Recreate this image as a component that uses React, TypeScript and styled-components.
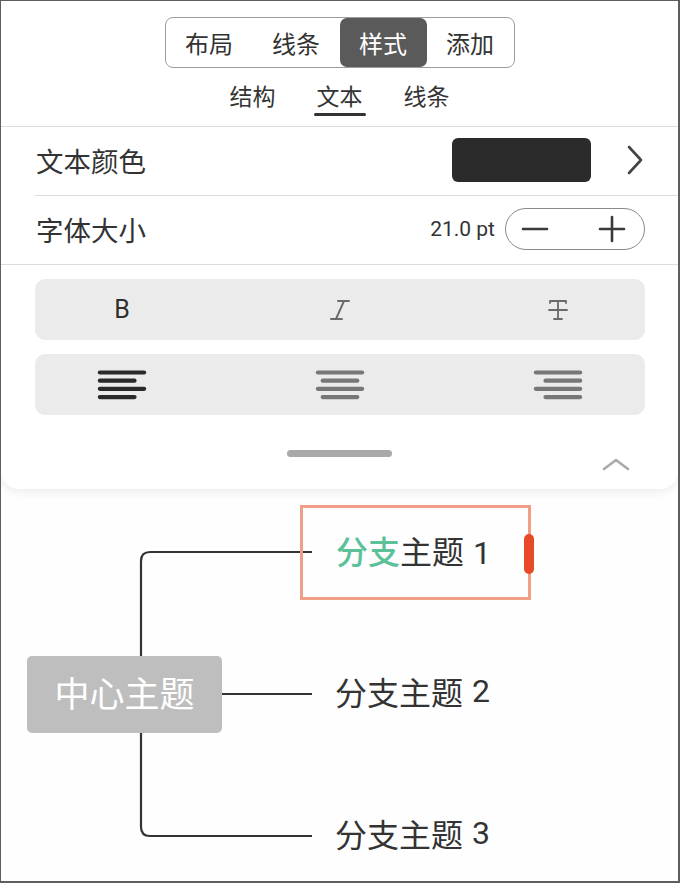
import React from "react";
import styled, { createGlobalStyle } from "styled-components";

const Global = createGlobalStyle`
  html, body { margin: 0; padding: 0; background: #fff; }
  * { box-sizing: border-box; }
  body { font-family: "Noto Sans", "Noto Sans CJK SC", sans-serif; color: #333; }
`;

const CJK = `"Noto Sans CJK SC", "Noto Sans", sans-serif`;
const LATIN = `Roboto, "Noto Sans", "Noto Sans CJK SC", sans-serif`;

const Frame = styled.div`
  width: 680px;
  height: 883px;
  border-style: solid;
  border-color: #5e5e5e;
  border-width: 1px 2px 2px 1px;
  background: #fefefe;
  display: flex;
  flex-direction: column;
  overflow: hidden;
`;

const Panel = styled.div`
  background: #fff;
  border-radius: 0 0 18px 18px;
  box-shadow: 0 3px 10px rgba(0, 0, 0, 0.07);
  display: flex;
  flex-direction: column;
  padding-top: 16px;
  position: relative;
  z-index: 1;
`;

const Segmented = styled.div`
  align-self: center;
  display: grid;
  grid-template-columns: repeat(4, 87px);
  height: 51px;
  border: 1px solid #9c9c9c;
  border-radius: 8px;
  background: #fff;
  overflow: hidden;
`;

const Segment = styled.div<{ $active?: boolean }>`
  display: flex;
  align-items: center;
  justify-content: center;
  font-family: ${CJK};
  font-size: 24px;
  color: ${(p) => (p.$active ? "#fff" : "#333")};
  background: ${(p) => (p.$active ? "#5a5a5a" : "transparent")};
  border-radius: ${(p) => (p.$active ? "7px" : "0")};
`;

const SubTabs = styled.div`
  align-self: center;
  margin-top: 9px;
  display: grid;
  grid-template-columns: repeat(3, 87px);
`;

const SubTab = styled.div<{ $active?: boolean }>`
  height: 49px;
  display: flex;
  flex-direction: column;
  align-items: center;
  padding-top: 4px;
  font-family: ${CJK};
  font-size: 23px;
  line-height: 28px;
  color: #333;
  &::after {
    content: "";
    margin-top: 4px;
    width: 52px;
    height: 3px;
    border-radius: 2px;
    background: ${(p) => (p.$active ? "#333" : "transparent")};
  }
`;

const Divider = styled.div<{ $inset?: boolean }>`
  height: 1px;
  background: #dcdcdc;
  margin-left: ${(p) => (p.$inset ? "34px" : "0")};
`;

const Row = styled.div`
  height: 68px;
  display: flex;
  align-items: center;
  padding: 0 33px 2px 35px;
`;

const Label = styled.div`
  flex: 1;
  font-family: ${CJK};
  font-size: 27.5px;
  color: #333;
`;

const Swatch = styled.div`
  width: 139px;
  height: 44px;
  border-radius: 6px;
  background: #2b2b2b;
  margin-right: 34px;
`;

const Value = styled.div`
  font-family: ${LATIN};
  font-size: 21px;
  color: #333;
  margin-right: 10px;
`;

const Stepper = styled.div`
  width: 140px;
  height: 42px;
  border: 1px solid #8a8a8a;
  border-radius: 21px;
  display: flex;
  align-items: center;
  justify-content: space-between;
  padding: 0 18px 0 15px;
`;

const Groups = styled.div`
  display: flex;
  flex-direction: column;
  gap: 14px;
  padding: 14px 33px 0 34px;
`;

const ButtonGroup = styled.div`
  height: 61px;
  border-radius: 10px;
  background: #ebebeb;
  display: flex;
  align-items: center;
  justify-content: space-between;
  padding: 0 62px;
`;

const ToolButton = styled.div`
  width: 50px;
  height: 40px;
  display: flex;
  align-items: center;
  justify-content: center;
`;

const BoldGlyph = styled.span`
  font-family: ${LATIN};
  font-size: 25px;
  font-weight: 400;
  color: #2e2e2e;
`;

const Footer = styled.div`
  height: 74px;
  position: relative;
  display: flex;
  align-items: center;
  justify-content: center;
  padding-top: 3px;
`;

const Handle = styled.div`
  width: 105px;
  height: 7px;
  border-radius: 4px;
  background: #a9a9a9;
`;

const CollapseIcon = styled.div`
  position: absolute;
  right: 48px;
  top: 42px;
  display: flex;
`;

const Canvas = styled.div`
  position: relative;
  flex: 1;
`;

const Lines = styled.svg`
  position: absolute;
  left: 0;
  top: 0;
`;

const Central = styled.div`
  position: absolute;
  left: 26px;
  top: 167px;
  width: 195px;
  height: 77px;
  border-radius: 5px;
  background: #bebebe;
  color: #fff;
  display: flex;
  align-items: center;
  justify-content: center;
  padding-bottom: 6px;
  font-family: ${CJK};
  font-size: 35px;
`;

const SelectedBox = styled.div`
  position: absolute;
  left: 299px;
  top: 16px;
  width: 231px;
  height: 95px;
  border: 3px solid #ef9f86;
  display: flex;
  align-items: center;
  padding-left: 33px;
  padding-bottom: 6px;
`;

const ResizeHandle = styled.div`
  position: absolute;
  right: -6px;
  top: 26px;
  width: 10px;
  height: 40px;
  border-radius: 5px;
  background: #e64a28;
`;

const Branch = styled.div<{ $top: number }>`
  position: absolute;
  left: 334px;
  top: ${(p) => p.$top}px;
  height: 44px;
  display: flex;
  align-items: center;
  font-family: ${CJK};
  font-size: 32px;
  color: #333;
`;

const BranchText = styled.span`
  font-family: ${CJK};
  font-size: 32px;
  color: #333;
`;

const Accent = styled.span`
  color: #5cc199;
  font-weight: 500;
`;

const Num = styled.span`
  font-family: ${LATIN};
  margin-left: 9px;
`;

const Chevron = () => (
  <svg width="20" height="32" viewBox="0 0 20 32">
    <path d="M4 3 L16 16 L4 29" fill="none" stroke="#444" strokeWidth="2.6" strokeLinecap="round" strokeLinejoin="round" />
  </svg>
);

const Minus = () => (
  <svg width="28" height="28" viewBox="0 0 28 28">
    <path d="M2 14 H26" stroke="#3a3a3a" strokeWidth="2.6" strokeLinecap="round" />
  </svg>
);

const Plus = () => (
  <svg width="28" height="28" viewBox="0 0 28 28">
    <path d="M2 14 H26 M14 2 V26" stroke="#3a3a3a" strokeWidth="2.6" strokeLinecap="round" />
  </svg>
);

const ItalicIcon = () => (
  <svg width="22" height="26" viewBox="0 0 22 26">
    <path d="M9 4 H20 M2 22 H13 M15 4 L7 22" stroke="#6a6a6a" strokeWidth="1.9" fill="none" strokeLinecap="round" />
  </svg>
);

const StrikeIcon = () => (
  <svg width="22" height="26" viewBox="0 0 22 26">
    <path d="M3 4 H19 M3 4 V6 M19 4 V6 M11 4 V22 M7 22 H15 M2 13 H20" stroke="#6a6a6a" strokeWidth="1.8" fill="none" strokeLinecap="round" />
  </svg>
);

const AlignIcon = ({ kind, color }: { kind: "left" | "center" | "right"; color: string }) => {
  const rows = [50, 40, 50, 40];
  return (
    <svg width="52" height="34" viewBox="0 0 52 34">
      {rows.map((w, i) => {
        const x = kind === "left" ? 1 : kind === "center" ? 1 + (50 - w) / 2 : 51 - w;
        const y = 4 + i * 8.5;
        return <line key={i} x1={x + 2} x2={x + w - 2} y1={y} y2={y} stroke={color} strokeWidth="4.4" strokeLinecap="round" />;
      })}
    </svg>
  );
};

const ChevronUp = () => (
  <svg width="28" height="16" viewBox="0 0 28 16">
    <path d="M2 12 L14 3 L26 12" fill="none" stroke="#a9a9a9" strokeWidth="2.6" strokeLinecap="round" strokeLinejoin="round" />
  </svg>
);

export default function App() {
  return (
    <>
      <Global />
      <Frame>
        <Panel>
          <Segmented>
            <Segment>布局</Segment>
            <Segment>线条</Segment>
            <Segment $active>样式</Segment>
            <Segment>添加</Segment>
          </Segmented>
          <SubTabs>
            <SubTab>结构</SubTab>
            <SubTab $active>文本</SubTab>
            <SubTab>线条</SubTab>
          </SubTabs>
          <Divider />
          <Row>
            <Label>文本颜色</Label>
            <Swatch />
            <Chevron />
          </Row>
          <Divider $inset />
          <Row>
            <Label>字体大小</Label>
            <Value>21.0 pt</Value>
            <Stepper>
              <Minus />
              <Plus />
            </Stepper>
          </Row>
          <Divider />
          <Groups>
            <ButtonGroup>
              <ToolButton>
                <BoldGlyph>B</BoldGlyph>
              </ToolButton>
              <ToolButton>
                <ItalicIcon />
              </ToolButton>
              <ToolButton>
                <StrikeIcon />
              </ToolButton>
            </ButtonGroup>
            <ButtonGroup>
              <ToolButton>
                <AlignIcon kind="left" color="#2a2a2a" />
              </ToolButton>
              <ToolButton>
                <AlignIcon kind="center" color="#777" />
              </ToolButton>
              <ToolButton>
                <AlignIcon kind="right" color="#777" />
              </ToolButton>
            </ButtonGroup>
          </Groups>
          <Footer>
            <Handle />
            <CollapseIcon>
              <ChevronUp />
            </CollapseIcon>
          </Footer>
        </Panel>
        <Canvas>
          <Lines width="677" height="394" viewBox="0 0 677 394">
            <g fill="none" stroke="#333" strokeWidth="2.2">
              <path d="M 311 63 H 149 Q 140 63 140 72 V 167" />
              <path d="M 221 205 H 311" />
              <path d="M 140 244 V 338 Q 140 347 149 347 H 311" />
            </g>
          </Lines>
          <Central>中心主题</Central>
          <SelectedBox>
            <BranchText>
              <Accent>分支</Accent>主题<Num>1</Num>
            </BranchText>
            <ResizeHandle />
          </SelectedBox>
          <Branch $top={180}>
            分支主题<Num>2</Num>
          </Branch>
          <Branch $top={322}>
            分支主题<Num>3</Num>
          </Branch>
        </Canvas>
      </Frame>
    </>
  );
}
